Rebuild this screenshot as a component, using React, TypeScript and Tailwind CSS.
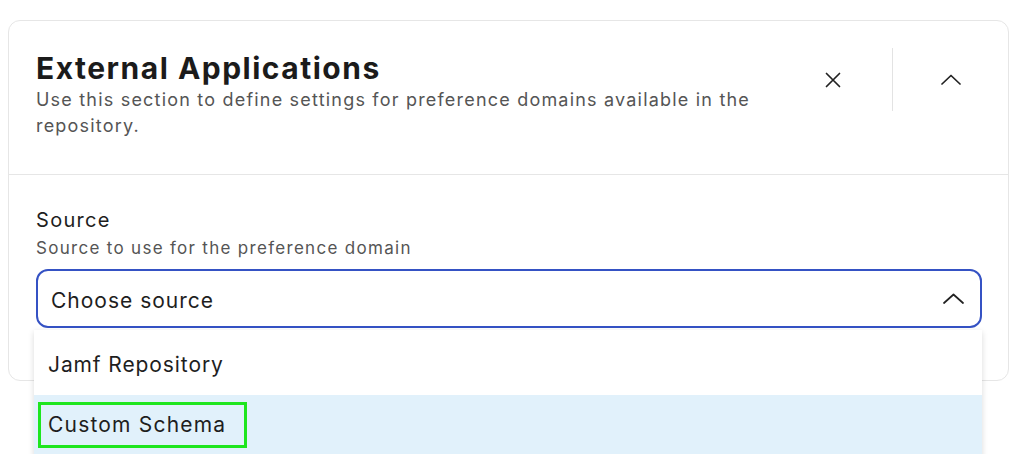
import React from "react";

export default function App() {
  return (
    <div
      className="w-[1024px] h-[454px] bg-white overflow-hidden relative"
      style={{ fontFamily: "Inter, 'Noto Sans', sans-serif" }}
    >
      <div className="ml-[8px] mt-[20px] w-[1001px] h-[361px] rounded-[12px] border border-[#e6e6e6] bg-white">
        <div className="flex items-start h-[154px] border-b border-[#e6e6e6] pl-[27px] pr-[37px]">
          <div className="flex-1 pt-[30px]">
            <h1 className="text-[30px] leading-[34px] font-bold text-[#1b1b1b] tracking-[1.5px]">
              External Applications
            </h1>
            <p className="mt-[2px] text-[18px] leading-[26px] text-[#555555] tracking-[1.2px] w-[760px]">
              Use this section to define settings for preference domains available in the repository.
            </p>
          </div>
          <div className="flex items-center h-[63px] mt-[27px]">
            <button className="w-[40px] h-[40px] flex items-center justify-center text-[#222]">
              <svg width="16" height="16" viewBox="0 0 16 16" fill="none" stroke="currentColor" strokeWidth="1.7" strokeLinecap="round">
                <path d="M1.5 1.5 L14.5 14.5 M14.5 1.5 L1.5 14.5" />
              </svg>
            </button>
            <div className="w-px h-[63px] bg-[#e3e3e3] ml-[39px] mr-[38px]" />
            <button className="w-[40px] h-[40px] flex items-center justify-center text-[#222]">
              <svg width="20" height="11" viewBox="0 0 20 11" fill="none" stroke="currentColor" strokeWidth="1.7" strokeLinecap="round" strokeLinejoin="round">
                <path d="M1 10 L10 1.5 L19 10" />
              </svg>
            </button>
          </div>
        </div>
        <div className="pl-[27px] pr-[26px] pt-[32px]">
          <div className="text-[20px] leading-[26px] text-[#1e1e1e] tracking-[1.3px]">Source</div>
          <div className="mt-[3px] text-[17px] leading-[24px] text-[#555555] tracking-[1.3px]">
            Source to use for the preference domain
          </div>
          <div className="mt-[9px] h-[59px] rounded-[12px] border-2 border-[#3552c4] flex items-center justify-between pl-[13px] pr-[16px]">
            <span className="text-[21px] text-[#1e1e1e] tracking-[1px] pt-[4px]">Choose source</span>
            <svg width="21" height="11" viewBox="0 0 21 11" fill="none" stroke="#222" strokeWidth="1.7" strokeLinecap="round" strokeLinejoin="round">
              <path d="M1 10 L10.5 1.5 L20 10" />
            </svg>
          </div>
        </div>
      </div>

      <div className="absolute left-[34px] top-[330px] w-[948px] h-[140px] bg-white shadow-[0_2px_6px_rgba(0,0,0,0.15)]">
        <div className="h-[65px] flex items-center pl-[14px] pt-[5px] text-[21px] text-[#1e1e1e] tracking-[0.9px]">
          Jamf Repository
        </div>
        <div className="h-[75px] bg-[#e1f1fb] pt-[7px] pl-[4px]">
          <div className="inline-flex items-center h-[46px] border-[3px] border-[#1ee61e] pl-[7px] pr-[18px] text-[21px] text-[#1e1e1e] tracking-[1.2px]">
            Custom Schema
          </div>
        </div>
      </div>
    </div>
  );
}
